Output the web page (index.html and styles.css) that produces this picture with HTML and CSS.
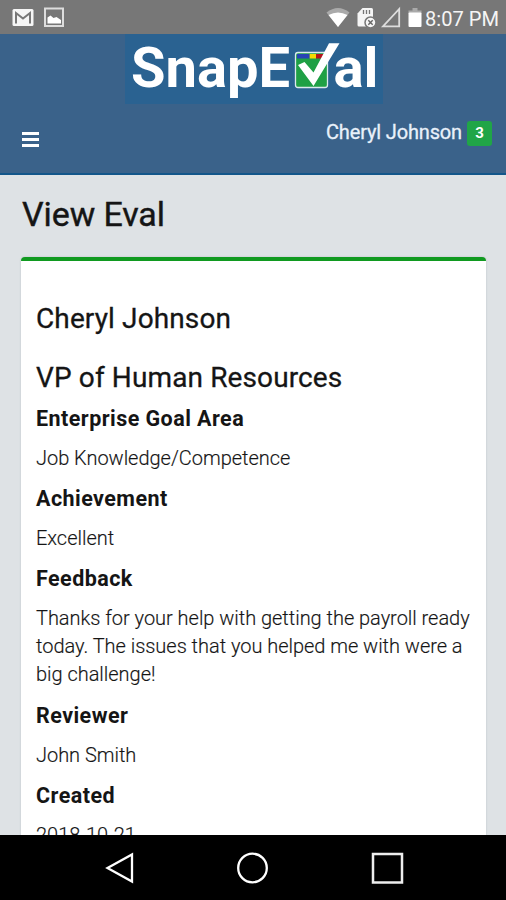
FILE: index.html
```
<!DOCTYPE html>
<html lang="en">

<head>
  <meta charset="utf-8">
  <title>SnapEval - View Eval</title>
  <link rel="stylesheet" href="styles.css">
</head>

<body>

  <div class="status-bar">
    <svg width="506" height="34" viewBox="0 0 506 34">
      <!-- mail -->
      <rect x="12.5" y="9" width="21" height="17" rx="1.5" fill="#f5f5f5"/>
      <path d="M16 23.500V13l7 5.500 7-5.500v10.500" fill="none" stroke="#777" stroke-width="2"/>
      <!-- picture -->
      <rect x="45" y="8.500" width="18" height="17.500" fill="none" stroke="#ddd" stroke-width="2"/>
      <path d="M47.500 23.500v-6l3-2 3 2.500 3-1 4.500 3v3.500z" fill="#fff"/>
      <!-- wifi -->
      <path d="M326.500 12.500q11.500-9 23 0l-11.500 14.500z" fill="#aaa"/>
      <path d="M328.500 15q9.500-5 19 0l-9.500 12z" fill="#fff"/>
      <!-- sd card -->
      <path d="M357.500 13.500l5-5.500h9q1.500 0 1.500 1.500v17h-14q-1.500 0-1.500-1.500z" fill="#f5f5f5"/>
      <path d="M363.500 10v4M366.500 10v4M369.500 10v4" stroke="#777" stroke-width="1.300"/>
      <circle cx="370.500" cy="22.500" r="5.500" fill="#f5f5f5" stroke="#777" stroke-width="1.500"/>
      <path d="M368.300 20.300l4.400 4.400M372.700 20.300l-4.400 4.400" stroke="#666" stroke-width="1.400"/>
      <!-- signal -->
      <path d="M383 26.300L399.200 9v17.300z" fill="none" stroke="#ddd" stroke-width="1.800"/>
      <!-- battery -->
      <path d="M412.500 8h5v2.500h4v3h-13v-3h4z" fill="#aaa"/>
      <rect x="408.500" y="12.500" width="13" height="14.500" rx="1" fill="#fff"/>
      <text class="clock" x="425" y="25.500" textLength="74" lengthAdjust="spacingAndGlyphs">8:07 PM</text>
    </svg>
  </div>

  <header class="header">
    <svg class="logo" width="258" height="70" viewBox="0 0 258 70">
      <text class="logo-text" x="6" y="52.500" textLength="159" lengthAdjust="spacingAndGlyphs">SnapE</text>
      <rect x="170.500" y="18.500" width="32" height="35" rx="2.500" fill="#1fa045" stroke="#dce9ee" stroke-width="1.300"/>
      <rect x="172" y="20" width="12.700" height="4.500" fill="#2743b5"/>
      <rect x="184.700" y="20" width="6.300" height="4.500" fill="#f5d800"/>
      <rect x="191" y="20" width="7" height="4.500" fill="#b3141c"/>
      <path d="M173 31l6.500-3 9 10.500L204 9.300h10.500L188.500 52z" fill="#fff"/>
      <text class="logo-text" x="208.500" y="52.500" textLength="45" lengthAdjust="spacingAndGlyphs">al</text>
    </svg>
    <div class="nav">
      <div class="menu">
        <span></span>
        <span></span>
        <span></span>
      </div>
      <div class="user">
        <span class="user-name">Cheryl Johnson</span>
        <span class="badge">3</span>
      </div>
    </div>
  </header>

  <main class="content">
    <h1>View Eval</h1>
    <div class="card">
      <h2 class="name">Cheryl Johnson</h2>
      <h2 class="position">VP of Human Resources</h2>
      <h3>Enterprise Goal Area</h3>
      <p>Job Knowledge/Competence</p>
      <h3>Achievement</h3>
      <p>Excellent</p>
      <h3>Feedback</h3>
      <p class="feedback">Thanks for your help with getting the payroll ready today. The issues that you helped me with were a big challenge!</p>
      <h3>Reviewer</h3>
      <p>John Smith</p>
      <h3>Created</h3>
      <p>2018-10-21</p>
    </div>
  </main>

  <div class="android-nav">
    <svg width="506" height="65" viewBox="0 0 506 65">
      <path d="M107.500 33L132 19.500v27z" fill="none" stroke="#fff" stroke-width="2.300"/>
      <circle cx="252.500" cy="33" r="14.300" fill="none" stroke="#fff" stroke-width="2.300"/>
      <rect x="373" y="19" width="29" height="28.500" fill="none" stroke="#eee" stroke-width="2.500"/>
    </svg>
  </div>

</body>
</html>
```
FILE: styles.css
```
* {
  box-sizing: border-box;
}

body {
  margin: 0;
  height: 900px;
  display: flex;
  flex-direction: column;
  overflow: hidden;
  font-family: Roboto, "Liberation Sans", sans-serif;
  color: #151515;
  background: #dee2e5;
}

svg {
  display: block;
}

.status-bar {
  flex: none;
  height: 34px;
  background: #777;
}

.clock {
  font-size: 21px;
  fill: #f5f5f5;
}

.header {
  flex: none;
  height: 141px;
  background: #3a628a;
  border-bottom: 2px solid #13568a;
}

.logo {
  margin-left: 125px;
  background: #2a6291;
}

.logo-text {
  font-size: 56px;
  font-weight: 700;
  fill: #fff;
}

.nav {
  display: flex;
  justify-content: space-between;
  padding: 14px 14px 0 22px;
}

.menu {
  width: 17px;
  padding-top: 14px;
}

.menu span {
  display: block;
  height: 3px;
  margin-bottom: 3px;
  background: #fff;
}

.user {
  display: flex;
  gap: 5px;
  height: 30px;
  color: #e9f1fa;
}

.user-name {
  font-size: 20px;
  letter-spacing: -0.15px;
  line-height: 28px;
  -webkit-text-stroke: 0.3px;
}

.badge {
  width: 25px;
  height: 25px;
  margin-top: 3px;
  border-radius: 3px;
  background: #20a547;
  color: #fff;
  font-size: 15px;
  font-weight: 700;
  line-height: 25px;
  text-align: center;
}

.content {
  flex: 1;
  min-height: 0;
  overflow: hidden;
  padding: 0 20px 0 21px;
}

h1 {
  margin: 19px 0 23px 1px;
  font-size: 34px;
  font-weight: 400;
  letter-spacing: -0.1px;
  line-height: 40px;
  -webkit-text-stroke: 0.4px;
}

.card {
  height: 700px;
  padding: 41px 12px 0 15px;
  border-top: 4px solid #109a20;
  border-radius: 4px;
  background: #fff;
  box-shadow: 0 0 2px #b5bdc2;
}

h2 {
  margin: 0 0 25px;
  font-size: 28px;
  font-weight: 400;
  letter-spacing: 0.12px;
  line-height: 34px;
  -webkit-text-stroke: 0.3px;
}

.position {
  margin-bottom: 10px;
}

h3 {
  margin: 0 0 11px;
  font-size: 21.5px;
  font-weight: 700;
  letter-spacing: 0.45px;
  line-height: 28px;
}

p {
  margin: 0 0 13px;
  font-size: 20px;
  font-weight: 300;
  letter-spacing: -0.03px;
  line-height: 28px;
  color: #151515;
  -webkit-text-stroke: 0.15px;
}

.feedback {
  margin-bottom: 14px;
}

.android-nav {
  flex: none;
  height: 65px;
  background: #000;
}
```
